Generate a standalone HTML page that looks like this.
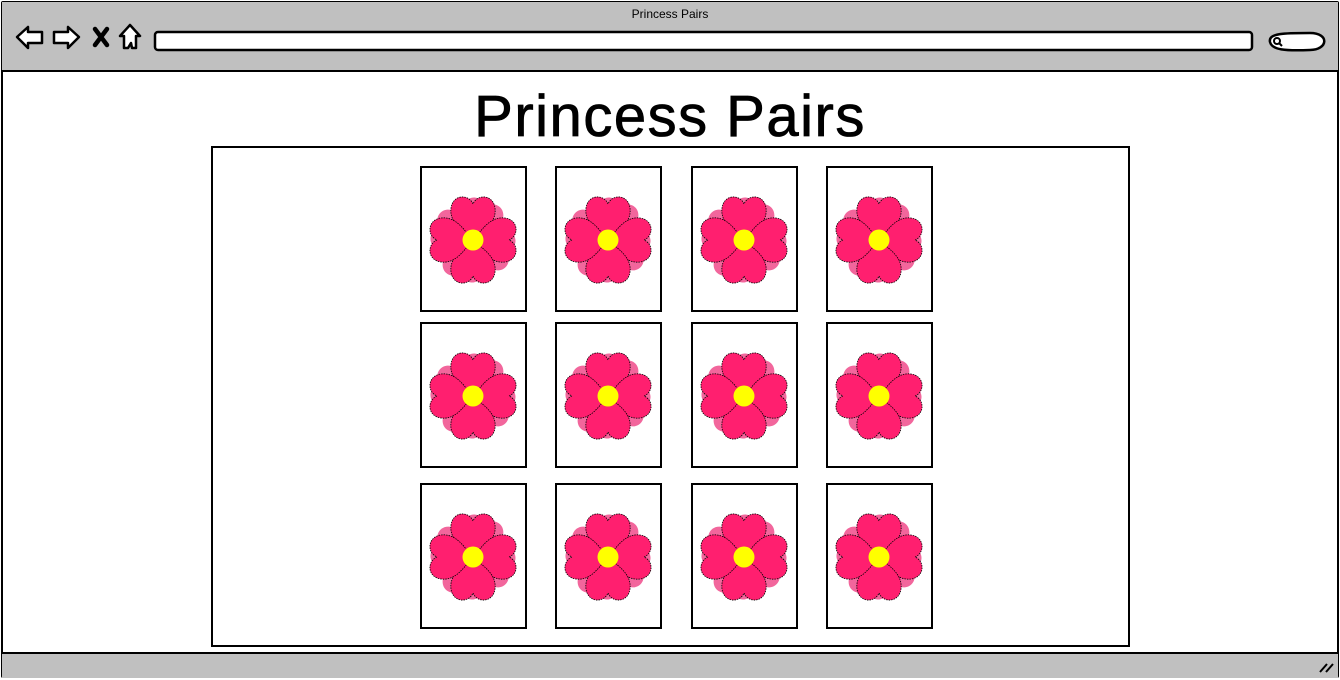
<!DOCTYPE html>
<html><head><style>
body{margin:0;width:1340px;height:680px;overflow:hidden;background:#fff;font-family:"Liberation Sans",sans-serif;position:relative}
.a{position:absolute;box-sizing:border-box}
</style></head><body>
<div class="a" style="left:1px;top:1px;width:1338px;height:677px;border:2px solid #000;border-radius:2px"></div>
<div class="a" style="left:2px;top:2px;width:1336px;height:70px;background:#c0c0c0;border-bottom:2px solid #000"></div>
<div class="a" style="left:0;top:7px;width:1340px;text-align:center;font-size:12px">Princess Pairs</div>
<svg class="a" style="left:0;top:0" width="1340" height="80">
<g fill="#fff" stroke="#000" stroke-width="2.5" stroke-linejoin="round">
<path d="M17,37 L28,27 L28,32 L42,32 L42,43 L28,43 L28,48 Z"/>
<path d="M79,37 L68,27 L68,32 L54,32 L54,43 L68,43 L68,48 Z"/>
<path d="M130,25 L140,36 L136,36 L136,48 L132,48 L131,43 L128,48 L124,48 L124,36 L120,36 Z"/>
<rect x="155" y="32" width="1097" height="18" rx="3"/>
<path d="M1270,42 C1268,33 1285,33 1310,33 C1330,33 1328,50 1310,50 C1285,51 1272,50 1270,42Z"/>
</g>
<path d="M95,29 L107,45 M107,29 L95,45" stroke="#000" stroke-width="4.5" stroke-linecap="round"/>
<circle cx="1277" cy="41" r="3" fill="none" stroke="#000" stroke-width="2"/>
<line x1="1279" y1="43" x2="1282" y2="46" stroke="#000" stroke-width="2"/>
</svg>
<div class="a" style="left:0;top:82px;width:1340px;text-align:center;font-size:58px;line-height:70px;letter-spacing:1.5px;-webkit-text-stroke:0.8px #000">Princess Pairs</div>
<div class="a" style="left:211px;top:146px;width:919px;height:501px;border:2px solid #000"></div>
<div class="a" style="left:2px;top:652px;width:1336px;height:26px;background:#c0c0c0;border-top:2px solid #000"></div>
<svg class="a" style="left:1318px;top:660px" width="18" height="14"><path d="M2,12 L9,4 M8,12 L15,4" stroke="#000" stroke-width="2"/></svg>
<svg class="a" style="left:0;top:0" width="1340" height="680">
<defs>
<path id="h" d="M0,0 C-8,-8 -24,-16 -22,-32 C-20,-46 -4,-46 0,-36 C4,-46 20,-46 22,-32 C24,-16 8,-8 0,0Z"/>
<g id="f">
<g fill="#f2669c"><use href="#h" transform="rotate(20) scale(.95)"/><use href="#h" transform="rotate(110) scale(.95)"/><use href="#h" transform="rotate(200) scale(.95)"/><use href="#h" transform="rotate(290) scale(.95)"/></g>
<g fill="#ff1f6f" stroke="#000" stroke-width=".8" stroke-dasharray="1.5 1"><use href="#h"/><use href="#h" transform="rotate(90)"/><use href="#h" transform="rotate(180)"/><use href="#h" transform="rotate(270)"/></g>
<circle r="10.5" fill="#ffff00"/>
</g>
<g id="c"><rect x="-52" y="-73" width="105" height="144" fill="#fff" stroke="#000" stroke-width="2"/><use href="#f"/></g>
</defs>
<use href="#c" x="473" y="240"/><use href="#c" x="608" y="240"/><use href="#c" x="744" y="240"/><use href="#c" x="879" y="240"/>
<use href="#c" x="473" y="396"/><use href="#c" x="608" y="396"/><use href="#c" x="744" y="396"/><use href="#c" x="879" y="396"/>
<use href="#c" x="473" y="557"/><use href="#c" x="608" y="557"/><use href="#c" x="744" y="557"/><use href="#c" x="879" y="557"/>
</svg>
</body></html>
